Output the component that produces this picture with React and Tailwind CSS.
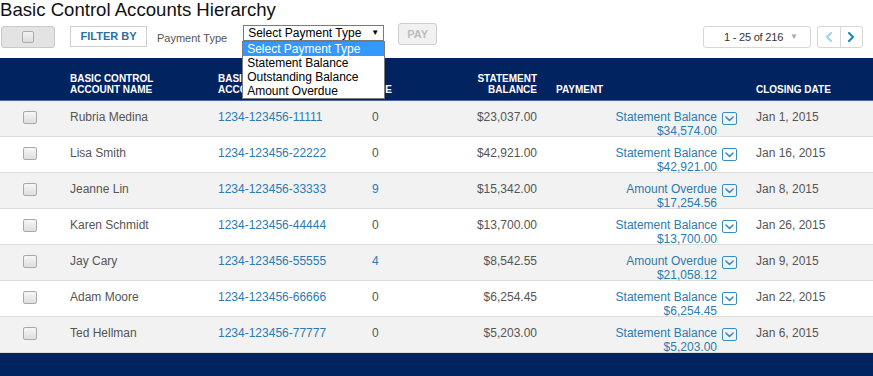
const rows = [
  { name: "Rubria Medina", num: "1234-123456-11111", due: "0", bal: "$23,037.00", type: "Statement Balance", amt: "$34,574.00", date: "Jan 1, 2015" },
  { name: "Lisa Smith", num: "1234-123456-22222", due: "0", bal: "$42,921.00", type: "Statement Balance", amt: "$42,921.00", date: "Jan 16, 2015" },
  { name: "Jeanne Lin", num: "1234-123456-33333", due: "9", bal: "$15,342.00", type: "Amount Overdue", amt: "$17,254.56", date: "Jan 8, 2015" },
  { name: "Karen Schmidt", num: "1234-123456-44444", due: "0", bal: "$13,700.00", type: "Statement Balance", amt: "$13,700.00", date: "Jan 26, 2015" },
  { name: "Jay Cary", num: "1234-123456-55555", due: "4", bal: "$8,542.55", type: "Amount Overdue", amt: "$21,058.12", date: "Jan 9, 2015" },
  { name: "Adam Moore", num: "1234-123456-66666", due: "0", bal: "$6,254.45", type: "Statement Balance", amt: "$6,254.45", date: "Jan 22, 2015" },
  { name: "Ted Hellman", num: "1234-123456-77777", due: "0", bal: "$5,203.00", type: "Statement Balance", amt: "$5,203.00", date: "Jan 6, 2015" },
];

const Checkbox = () => (
  <div className="w-[14px] h-[13px] rounded-[2px] border border-[#a9a9a9] bg-gradient-to-b from-[#f7f7f7] to-[#dedede]" />
);

const Chevron = ({ dir, color }) => (
  <svg width="8" height="10" viewBox="0 0 8 10" fill="none">
    <path
      d={dir === "left" ? "M6 1 L2 5 L6 9" : "M2 1 L6 5 L2 9"}
      stroke={color}
      strokeWidth="2"
      strokeLinecap="round"
      strokeLinejoin="round"
    />
  </svg>
);

const Toolbar = () => (
  <div className="flex items-start h-[36px] relative">
    <button className="ml-[1px] mt-[4px] w-[54px] h-[22px] rounded-[3px] border border-[#c9c9c9] bg-[#e3e3e3] flex items-center justify-center">
      <div className="w-[12px] h-[12px] rounded-[2px] border border-[#ababab] bg-gradient-to-b from-[#f4f4f4] to-[#dcdcdc]" />
    </button>
    <button className="ml-[15px] mt-[4px] w-[77px] h-[21px] border border-[#cfcfcf] bg-white text-[11px] font-bold text-[#2b6fa6] leading-none">
      FILTER BY
    </button>
    <span className="ml-[10px] mt-[9px] text-[11px] text-[#555] leading-[14px]">Payment Type</span>
    <div className="relative ml-[16px] mt-[3px]">
      <div className="w-[141px] h-[16px] border border-[#7a7a7a] bg-white flex items-center pl-[4px] pr-[4px] text-[12px] leading-none text-black">
        <span className="flex-1">Select Payment Type</span>
        <span className="text-[8px]">▼</span>
      </div>
      <ul className="absolute left-[-1px] top-[16px] w-[143px] border border-[#7a7a7a] bg-white text-[12px] leading-[14px] text-black z-10">
        <li className="bg-[#3399ff] text-white pl-[4px]">Select Payment Type</li>
        <li className="pl-[4px]">Statement Balance</li>
        <li className="pl-[4px]">Outstanding Balance</li>
        <li className="pl-[4px]">Amount Overdue</li>
      </ul>
    </div>
    <button className="ml-[14px] mt-[1px] w-[39px] h-[22px] rounded-[3px] border border-[#cdcdcd] bg-[#f1f1f1] text-[11px] font-bold text-[#bdbdbd] leading-none">
      PAY
    </button>
    <div className="flex-1" />
    <div className="mt-[4px] w-[108px] h-[22px] rounded-[3px] border border-[#d6d6d6] bg-white flex items-center justify-end pr-[12px] text-[11px] text-[#333] leading-none">
      <span className="tracking-[-0.2px]">1 - 25 of 216</span>
      <span className="ml-[7px] text-[8px] text-[#aaa]">▼</span>
    </div>
    <div className="ml-[6px] mr-[10px] mt-[4px] w-[46px] h-[22px] rounded-[3px] border border-[#d6d6d6] bg-white flex">
      <div className="flex-1 flex items-center justify-center border-r border-[#d6d6d6]">
        <Chevron dir="left" color="#9fd2ea" />
      </div>
      <div className="flex-1 flex items-center justify-center">
        <Chevron dir="right" color="#1a86b6" />
      </div>
    </div>
  </div>
);

const Header = () => (
  <div className="h-[43px] bg-[#012360] border-b border-[#4a68a0] flex items-end pb-[5px] text-[10px] font-bold text-white leading-[11px]">
    <div className="w-[70px]" />
    <div className="w-[148px]">BASIC CONTROL<br />ACCOUNT NAME</div>
    <div className="w-[154px] whitespace-nowrap">BASIC CONTROL<br />ACCOUNT NUMBER</div>
    <div className="w-[85px] whitespace-nowrap">
      <div className="-ml-[30px]">DAYS<br />PAST DUE</div>
    </div>
    <div className="w-[80px] text-right">STATEMENT<br />BALANCE</div>
    <div className="w-[200px] pl-[19px]">PAYMENT</div>
    <div className="pl-[19px]">CLOSING DATE</div>
  </div>
);

const Row = ({ r, i }) => (
  <div className={`h-[36px] border-b border-[#dcdcdc] flex items-start text-[12px] leading-[14px] ${i % 2 === 0 ? "bg-[#f2f2f2]" : "bg-white"}`}>
    <div className="w-[70px] pl-[23px] pt-[10px]">
      <Checkbox />
    </div>
    <div className="w-[148px] pt-[9px] text-[#555]">{r.name}</div>
    <div className="w-[154px] pt-[9px] text-[#2b7bb1]">{r.num}</div>
    <div className={`w-[85px] pt-[9px] ${r.due === "0" ? "text-[#555]" : "text-[#2b7bb1]"}`}>{r.due}</div>
    <div className="w-[80px] pt-[9px] text-right text-[#555]">{r.bal}</div>
    <div className="w-[200px] pt-[9px] flex justify-end">
      <div className="text-right text-[#2b7bb1]">
        {r.type}
        <br />
        {r.amt}
      </div>
      <div className="ml-[5px] mt-[2px] w-[15px] h-[13px] rounded-[2px] border-[1.5px] border-[#3b8cc2] flex items-center justify-center">
        <svg width="9" height="6" viewBox="0 0 9 6" fill="none">
          <path d="M1 1 L4.5 4.5 L8 1" stroke="#3b8cc2" strokeWidth="1.6" strokeLinecap="round" strokeLinejoin="round" />
        </svg>
      </div>
    </div>
    <div className="pl-[19px] pt-[9px] text-[#555]">{r.date}</div>
  </div>
);

export default function App() {
  return (
    <div className="w-[873px] h-[376px] overflow-hidden bg-white font-['Liberation_Sans',Arial,sans-serif]">
      <h1 className="h-[22px] text-[18.6px] leading-[20px] text-[#111]">Basic Control Accounts Hierarchy</h1>
      <Toolbar />
      <Header />
      {rows.map((r, i) => (
        <Row key={r.num} r={r} i={i} />
      ))}
      <div className="h-[24px] bg-[#012360]" />
    </div>
  );
}
